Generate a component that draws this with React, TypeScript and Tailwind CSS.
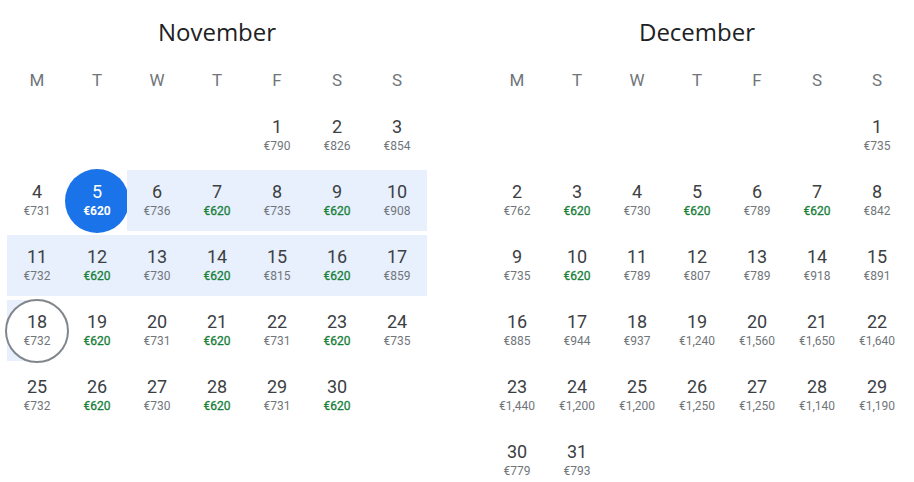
import React from "react";

type Day = { d: number; p: string; low?: boolean };

const WEEKDAYS = ["M", "T", "W", "T", "F", "S", "S"];

function toDays(prices: string[], low: number[]): Day[] {
  return prices.map((p, i) => ({ d: i + 1, p: "€" + p, low: low.includes(i + 1) }));
}

const november = toDays(
  ["790", "826", "854", "731", "620", "736", "620", "735", "620", "908", "732", "620", "730", "620", "815", "620", "859", "732", "620", "731", "620", "731", "620", "735", "732", "620", "730", "620", "731", "620"],
  [7, 9, 12, 14, 16, 19, 21, 23, 26, 28, 30]
);

const december = toDays(
  ["735", "762", "620", "730", "620", "789", "620", "842", "735", "620", "789", "807", "789", "918", "891", "885", "944", "937", "1,240", "1,560", "1,650", "1,640", "1,440", "1,200", "1,200", "1,250", "1,250", "1,140", "1,190", "779", "793"],
  [3, 5, 7, 10]
);

type Range = { start: number; end: number } | null;

function DayCell({ day, range }: { day: Day | null; range: Range }) {
  if (!day) return <div className="h-[61px]" />;
  const isStart = range && day.d === range.start;
  const isEnd = range && day.d === range.end;
  const inside = range && day.d > range.start && day.d < range.end;

  return (
    <div className={`relative flex h-[61px] items-center justify-center ${inside ? "bg-[#e8f0fe]" : ""}`}>
      {isEnd ? <span className="absolute inset-y-0 left-0 w-1/2 bg-[#e8f0fe]" /> : null}
      {isStart ? (
        <span className="absolute left-1/2 top-1/2 h-16 w-16 -translate-x-1/2 -translate-y-1/2 rounded-full bg-[#1a73e8]" />
      ) : null}
      {isEnd ? (
        <span className="absolute left-1/2 top-1/2 h-16 w-16 -translate-x-1/2 -translate-y-1/2 rounded-full border-2 border-[#80868b] bg-white" />
      ) : null}
      <div className="relative flex flex-col items-center">
        <span className={`text-[18px] leading-[20px] ${isStart ? "text-white" : "text-[#3c4043]"}`}>{day.d}</span>
        <span
          className={`mt-[2px] text-[12px] leading-[15px] ${
            isStart
              ? "font-bold text-white"
              : day.low
                ? "text-[#188038] [-webkit-text-stroke:0.3px_#188038]"
                : "text-[#70757a]"
          }`}
        >
          {day.p}
        </span>
      </div>
    </div>
  );
}

function Month({ name, offset, days, range }: { name: string; offset: number; days: Day[]; range: Range }) {
  const cells: (Day | null)[] = [...Array(offset).fill(null), ...days];
  while (cells.length % 7) cells.push(null);
  const rows: (Day | null)[][] = [];
  for (let i = 0; i < cells.length; i += 7) rows.push(cells.slice(i, i + 7));

  return (
    <div className="w-[420px] shrink-0">
      <div className="flex h-[64px] items-center justify-center font-['Open_Sans',sans-serif] text-[24px] text-[#202124]">
        {name}
      </div>
      <div className="grid h-[34px] grid-cols-7 items-center text-center text-[17px] text-[#70757a]">
        {WEEKDAYS.map((w, i) => (
          <span key={i}>{w}</span>
        ))}
      </div>
      <div className="mt-[7px] flex flex-col gap-1">
        {rows.map((row, r) => (
          <div key={r} className="grid grid-cols-7">
            {row.map((day, c) => (
              <DayCell key={c} day={day} range={range} />
            ))}
          </div>
        ))}
      </div>
    </div>
  );
}

export default function App() {
  return (
    <div className="flex h-[482px] gap-[60px] overflow-hidden bg-white pl-[7px] font-['Roboto',sans-serif]">
      <Month name="November" offset={4} days={november} range={{ start: 5, end: 18 }} />
      <Month name="December" offset={6} days={december} range={null} />
    </div>
  );
}
